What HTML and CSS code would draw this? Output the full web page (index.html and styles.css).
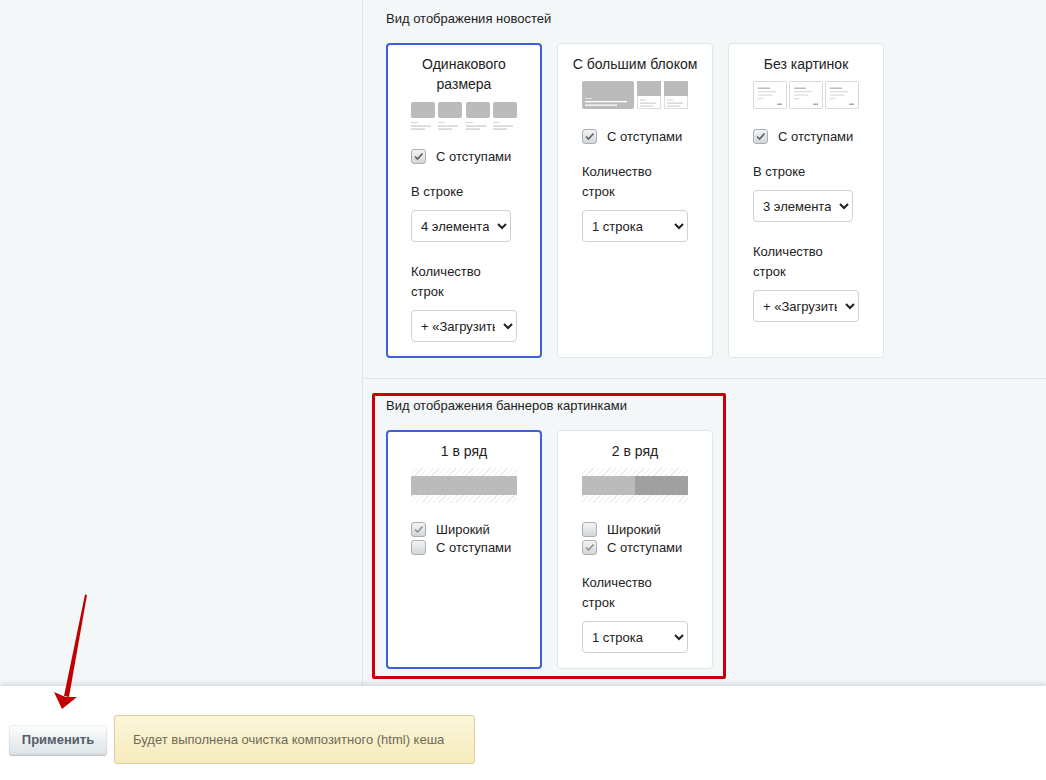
FILE: index.html
```html
<!DOCTYPE html>
<html lang="ru">
<head>
    <meta charset="UTF-8">
    <meta name="viewport" content="width=device-width, initial-scale=1.0">
    <title>Настройки отображения</title>
    <link rel="stylesheet" href="styles.css">
</head>
<body>
    <div class="layout">
        <aside class="sidebar"></aside>

        <main class="content">
            <!-- Вид новостей -->
            <section class="section section-first">
                <div class="section-title">Вид отображения новостей</div>
                <div class="cards">
                    <div class="card card-active">
                        <div class="card-title">Одинакового размера</div>
                        <svg class="thumb" width="106" height="29" viewBox="0 0 106 29">
                            <g fill="#bbb">
                                <rect x="0" y="1" width="24" height="16" rx="2"/>
                                <rect x="27" y="1" width="24" height="16" rx="2"/>
                                <rect x="55" y="1" width="24" height="16" rx="2"/>
                                <rect x="82" y="1" width="24" height="16" rx="2"/>
                            </g>
                            <g fill="#d6d6d6">
                                <rect x="0" y="21" width="7" height="1"/>
                                <rect x="27" y="21" width="7" height="1"/>
                                <rect x="55" y="21" width="7" height="1"/>
                                <rect x="82" y="21" width="7" height="1"/>
                            </g>
                            <g fill="#c8c8c8">
                                <rect x="0" y="24.5" width="20" height="1.2"/>
                                <rect x="27" y="24.5" width="20" height="1.2"/>
                                <rect x="55" y="24.5" width="20" height="1.2"/>
                                <rect x="82" y="24.5" width="20" height="1.2"/>
                                <rect x="0" y="27.5" width="14" height="1.2"/>
                                <rect x="27" y="27.5" width="14" height="1.2"/>
                                <rect x="55" y="27.5" width="14" height="1.2"/>
                                <rect x="82" y="27.5" width="14" height="1.2"/>
                            </g>
                        </svg>
                        <div class="checks">
                            <label class="check">
                                <span class="box"><svg width="11" height="11" viewBox="0 0 11 11"><path d="M2 5.5 L4.5 8 L9.5 2.5" fill="none" stroke="#5d5d5d" stroke-width="1.6"/></svg></span>
                                С отступами
                            </label>
                        </div>
                        <div class="field-label">В строке</div>
                        <select class="select select-short"><option>4 элемента</option></select>
                        <div class="field-label">Количество строк</div>
                        <select class="select"><option>+ «Загрузить ещё»</option></select>
                    </div>

                    <div class="card">
                        <div class="card-title">С большим блоком</div>
                        <svg class="thumb thumb-low" width="106" height="28" viewBox="0 0 106 28">
                            <rect x="0" y="0" width="52" height="28" rx="2" fill="#bbb"/>
                            <rect x="3" y="17" width="7" height="1" fill="#e2e2e2"/>
                            <rect x="3" y="20" width="42" height="1.3" fill="#fff"/>
                            <rect x="3" y="23.5" width="32" height="1.3" fill="#fff"/>
                            <rect x="55.5" y="0.5" width="23" height="27" fill="#fff" stroke="#dcdcdc"/>
                            <rect x="55" y="0" width="24" height="15" fill="#bbb"/>
                            <rect x="82.5" y="0.5" width="23" height="27" fill="#fff" stroke="#dcdcdc"/>
                            <rect x="82" y="0" width="24" height="15" fill="#bbb"/>
                            <g fill="#cfcfcf">
                                <rect x="58" y="18.5" width="6" height="1"/>
                                <rect x="58" y="21.5" width="16" height="1.2"/>
                                <rect x="58" y="24.5" width="13" height="1.2"/>
                                <rect x="85" y="18.5" width="6" height="1"/>
                                <rect x="85" y="21.5" width="16" height="1.2"/>
                                <rect x="85" y="24.5" width="13" height="1.2"/>
                            </g>
                        </svg>
                        <div class="checks">
                            <label class="check">
                                <span class="box"><svg width="11" height="11" viewBox="0 0 11 11"><path d="M2 5.5 L4.5 8 L9.5 2.5" fill="none" stroke="#5d5d5d" stroke-width="1.6"/></svg></span>
                                С отступами
                            </label>
                        </div>
                        <div class="field-label">Количество строк</div>
                        <select class="select"><option>1 строка</option></select>
                    </div>

                    <div class="card">
                        <div class="card-title">Без картинок</div>
                        <svg class="thumb thumb-low" width="106" height="28" viewBox="0 0 106 28">
                            <g fill="#fff" stroke="#d8d8d8">
                                <rect x="0.5" y="0.5" width="33" height="27" rx="1"/>
                                <rect x="36.5" y="0.5" width="33" height="27" rx="1"/>
                                <rect x="72.5" y="0.5" width="33" height="27" rx="1"/>
                            </g>
                            <g fill="#bdbdbd">
                                <rect x="5" y="6.5" width="12" height="1.5"/>
                                <rect x="41" y="6.5" width="12" height="1.5"/>
                                <rect x="77" y="6.5" width="12" height="1.5"/>
                            </g>
                            <g fill="#dcdcdc">
                                <rect x="5" y="10" width="18" height="1.2"/>
                                <rect x="5" y="13.5" width="14" height="1.2"/>
                                <rect x="5" y="17" width="5" height="1.2"/>
                                <rect x="41" y="10" width="18" height="1.2"/>
                                <rect x="41" y="13.5" width="14" height="1.2"/>
                                <rect x="41" y="17" width="5" height="1.2"/>
                                <rect x="77" y="10" width="18" height="1.2"/>
                                <rect x="77" y="13.5" width="14" height="1.2"/>
                                <rect x="77" y="17" width="5" height="1.2"/>
                            </g>
                            <g fill="#a8a8a8">
                                <rect x="24" y="22.5" width="5" height="1.5"/>
                                <rect x="60" y="22.5" width="5" height="1.5"/>
                                <rect x="96" y="22.5" width="5" height="1.5"/>
                            </g>
                        </svg>
                        <div class="checks">
                            <label class="check">
                                <span class="box"><svg width="11" height="11" viewBox="0 0 11 11"><path d="M2 5.5 L4.5 8 L9.5 2.5" fill="none" stroke="#5d5d5d" stroke-width="1.6"/></svg></span>
                                С отступами
                            </label>
                        </div>
                        <div class="field-label">В строке</div>
                        <select class="select select-short"><option>3 элемента</option></select>
                        <div class="field-label">Количество строк</div>
                        <select class="select"><option>+ «Загрузить ещё»</option></select>
                    </div>
                </div>
            </section>

            <!-- Вид баннеров -->
            <section class="section">
                <div class="section-title">Вид отображения баннеров картинками</div>
                <div class="cards">
                    <div class="card card-active">
                        <div class="card-title">1 в ряд</div>
                        <div class="banner">
                            <div class="banner-bar"><span class="bar-part"></span></div>
                        </div>
                        <div class="checks">
                            <label class="check">
                                <span class="box"><svg width="11" height="11" viewBox="0 0 11 11"><path d="M2 5.5 L4.5 8 L9.5 2.5" fill="none" stroke="#8a8a8a" stroke-width="1.4"/></svg></span>
                                Широкий
                            </label>
                            <label class="check">
                                <span class="box"></span>
                                С отступами
                            </label>
                        </div>
                    </div>

                    <div class="card">
                        <div class="card-title">2 в ряд</div>
                        <div class="banner">
                            <div class="banner-bar"><span class="bar-part"></span><span class="bar-part bar-dark"></span></div>
                        </div>
                        <div class="checks">
                            <label class="check">
                                <span class="box"></span>
                                Широкий
                            </label>
                            <label class="check">
                                <span class="box"><svg width="11" height="11" viewBox="0 0 11 11"><path d="M2 5.5 L4.5 8 L9.5 2.5" fill="none" stroke="#8a8a8a" stroke-width="1.4"/></svg></span>
                                С отступами
                            </label>
                        </div>
                        <div class="field-label">Количество строк</div>
                        <select class="select"><option>1 строка</option></select>
                    </div>
                </div>
                <div class="mark"></div>
            </section>
        </main>
    </div>

    <footer class="footer">
        <button class="btn">Применить</button>
        <div class="notice">Будет выполнена очистка композитного (html) кеша</div>
    </footer>

    <!-- стрелка-указатель на кнопку -->
    <svg class="arrow" width="120" height="780" viewBox="0 0 120 780">
        <polygon points="87,595 85,594.6 64,696 69,697" fill="#c00000"/>
        <polygon points="62,709 54,692 65.5,697 77,697" fill="#c00000"/>
    </svg>
</body>
</html>
```

FILE: styles.css
```css
* {
    box-sizing: border-box;
}
html, body {
    margin: 0;
}
body {
    position: relative;
    height: 780px;
    overflow: hidden;
    display: flex;
    flex-direction: column;
    font-family: "Liberation Sans", Arial, sans-serif;
    font-size: 13px;
    color: #222;
    background: #f4f7f8;
}
.layout {
    flex: 1;
    display: flex;
    min-height: 0;
}
.sidebar {
    width: 363px;
    flex-shrink: 0;
    border-right: 1px solid #dfe6ea;
}
.content {
    flex: 1;
}
.section {
    position: relative;
    padding: 19px 23px 20px;
}
.section-first {
    padding-top: 11px;
}
.section + .section {
    border-top: 1px solid #dfe6ea;
    padding-bottom: 18px;
}
.section-title {
    line-height: 16px;
    margin-bottom: 16px;
}
.cards {
    display: flex;
    gap: 15px;
}
.card {
    width: 156px;
    background: #fff;
    border: 1px solid #dfe6ea;
    border-radius: 4px;
    padding: 10px 24px 15px;
}
.card-active {
    border: 2px solid #3d5fdb;
    padding: 9px 23px 14px;
}
.card-title {
    font-size: 14px;
    line-height: 20px;
    text-align: center;
    margin: 0 -14px 7px;
}
.thumb {
    display: block;
}
.thumb-low {
    margin-top: 1px;
}
.thumb-low + .checks {
    margin-top: 18px;
}
.checks {
    margin-top: 17px;
}
.check {
    display: flex;
    align-items: center;
    gap: 10px;
    height: 18px;
}
.box {
    width: 15px;
    height: 15px;
    flex-shrink: 0;
    display: flex;
    align-items: center;
    justify-content: center;
    border: 1px solid #a9b0b5;
    border-radius: 3px;
    background: linear-gradient(#f3f4f5, #d3d7da);
}
.field-label {
    line-height: 20px;
    margin-top: 17px;
}
.select {
    display: block;
    width: 100%;
    height: 32px;
    margin-top: 8px;
    padding: 0 5px;
    font: 13px "Liberation Sans", Arial, sans-serif;
    color: #222;
    background: #fff;
    border: 1px solid #c9d2d8;
    border-radius: 4px;
}
.select-short {
    width: 100px;
}
.select + .field-label {
    margin-top: 20px;
}
/* превью баннеров */
.banner {
    height: 35px;
    padding: 8px 0;
    background: repeating-linear-gradient(-45deg, #fff 0 3px, #ebebeb 3px 4px);
}
.banner-bar {
    display: flex;
    height: 19px;
}
.bar-part {
    flex: 1;
    background: #bbb;
}
.bar-dark {
    background: #a0a0a0;
}
.mark {
    position: absolute;
    left: 9px;
    top: 14px;
    width: 354px;
    height: 286px;
    border: 3px solid #c8000a;
    border-radius: 2px;
    pointer-events: none;
}
.footer {
    position: relative;
    height: 94px;
    flex-shrink: 0;
    display: flex;
    align-items: center;
    gap: 7px;
    padding: 13px 9px 0;
    background: #fff;
    box-shadow: 0 -3px 4px rgba(60, 80, 90, 0.14);
}
.btn {
    width: 98px;
    height: 30px;
    font: bold 13px "Liberation Sans", Arial, sans-serif;
    color: #535c69;
    border: none;
    border-radius: 3px;
    background: linear-gradient(#fdfefe, #dce3e7);
    box-shadow: 0 1px 1px rgba(0, 0, 0, 0.25), inset 0 0 0 1px rgba(0, 0, 0, 0.05);
}
.notice {
    height: 49px;
    display: flex;
    align-items: center;
    padding: 0 30px 0 18px;
    color: #6f6a57;
    background: linear-gradient(#fcf6da, #f6ebbd);
    border: 1px solid #dccf9c;
    border-radius: 3px;
}
.arrow {
    position: absolute;
    left: 0;
    top: 0;
    pointer-events: none;
}
```
